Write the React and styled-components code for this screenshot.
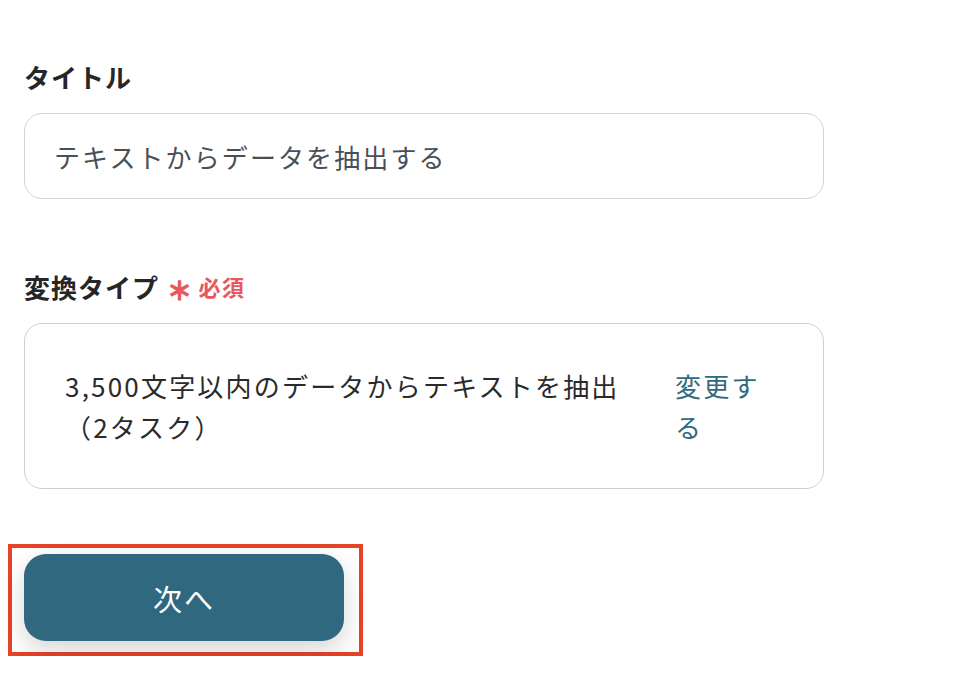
import React from 'react';
import styled, { createGlobalStyle } from 'styled-components';

// ================= STYLES =================

const GlobalStyle = createGlobalStyle`
  html, body {
    margin: 0;
    padding: 0;
    background: #fff;
  }
  body {
    font-family: "Noto Sans CJK JP", "Noto Sans", sans-serif;
    color: #222;
  }
`;

const Page = styled.div`
  padding: 58px 0 0 24px;
  width: 800px;
`;

const Field = styled.div`
  margin-bottom: ${(p) => p.$gap || 0}px;
`;

const Label = styled.div`
  display: flex;
  align-items: center;
  height: 36px;
  margin-bottom: 19px;
  font-size: 26px;
  font-weight: 700;
  letter-spacing: 1px;
  color: #262626;
`;

const Required = styled.span`
  display: inline-flex;
  align-items: center;
  margin-left: 8px;
  font-size: 22px;
  font-weight: 700;
  letter-spacing: 1.5px;
  color: #e8585e;
`;

const Asterisk = styled.span`
  font-size: 25px;
  margin-right: 5px;
  position: relative;
  top: 3px;
  -webkit-text-stroke: 1.2px #e8585e;
`;

const TextInput = styled.div`
  height: 86px;
  box-sizing: border-box;
  border: 1.5px solid #d0d5da;
  border-radius: 18px;
  padding: 0 29px;
  display: flex;
  align-items: center;
  font-size: 26px;
  letter-spacing: 2.1px;
  color: #4a4f55;
`;

const SelectCard = styled.div`
  box-sizing: border-box;
  border: 1.5px solid #cfcfcf;
  border-radius: 18px;
  padding: 41px 52px 41px 40px;
  display: flex;
  gap: 34px;
  font-size: 26px;
  line-height: 41px;
  letter-spacing: 2.2px;
`;

const CardText = styled.div`
  flex: 1;
  color: #2a2a2a;
`;

const ChangeLink = styled.a`
  width: 96px;
  flex-shrink: 0;
  color: #2f6a80;
  text-decoration: none;
  cursor: pointer;
`;

const Highlight = styled.div`
  display: inline-block;
  margin: 55px 0 0 -16px;
  padding: 6px 15px 11px 12px;
  border: 4px solid #e64329;
`;

const NextButton = styled.button`
  display: block;
  width: 320px;
  height: 87px;
  border: none;
  border-radius: 22px;
  background: #306880;
  color: #fff;
  font-family: inherit;
  font-size: 29px;
  letter-spacing: 2px;
  box-shadow: 0 10px 26px rgba(0, 0, 0, 0.16);
  cursor: pointer;
`;

// ================= COMPONENT =================

const App = () => {
  return (
    <>
      <GlobalStyle />
      <Page>
        <Field $gap={69}>
          <Label>タイトル</Label>
          <TextInput>テキストからデータを抽出する</TextInput>
        </Field>

        <Field>
          <Label>
            変換タイプ
            <Required>
              <Asterisk>＊</Asterisk>必須
            </Required>
          </Label>
          <SelectCard>
            <CardText>3,500文字以内のデータからテキストを抽出（2タスク）</CardText>
            <ChangeLink>変更する</ChangeLink>
          </SelectCard>
        </Field>

        <Highlight>
          <NextButton>次へ</NextButton>
        </Highlight>
      </Page>
    </>
  );
};

export default App;
